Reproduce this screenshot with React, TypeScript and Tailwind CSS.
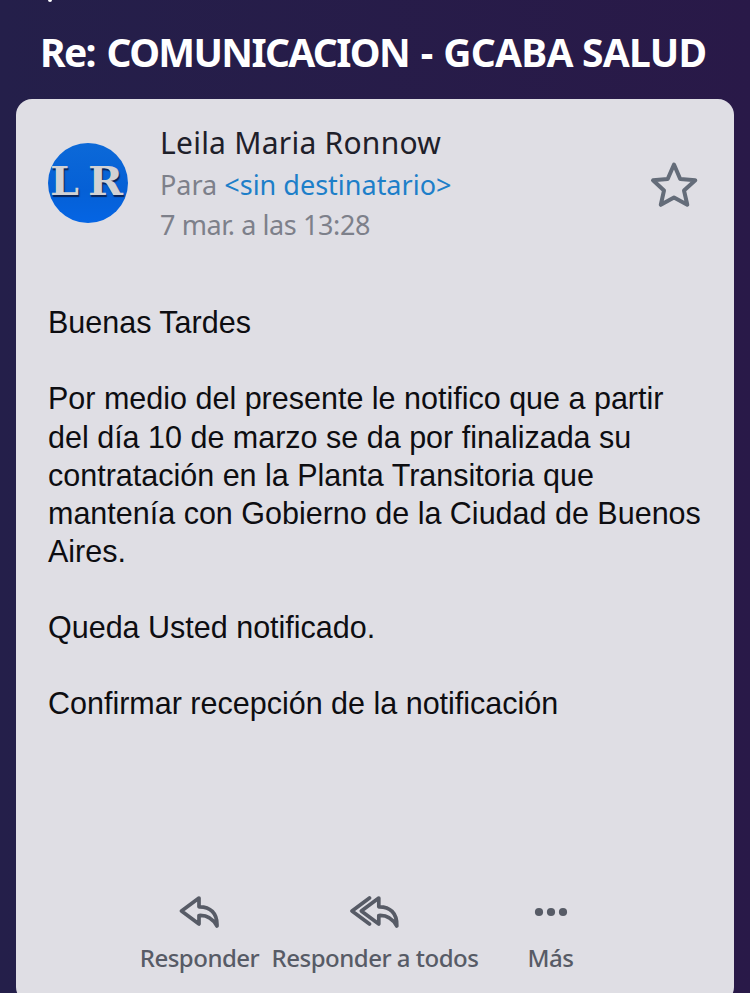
const ARROW = 'M20 3 L2.5 16 L20 29 V20.5 C28 20 34 24 38 31 C38.5 18 31 11.5 20 11.8 Z';

function Avatar() {
  return (
    <div className="w-20 h-20 rounded-full overflow-hidden shrink-0">
      <svg width="80" height="80" viewBox="0 0 80 80">
        <defs>
          <linearGradient id="avatar" x1="0" y1="0" x2="0" y2="1">
            <stop offset="0" stopColor="#0c69d8" />
            <stop offset="0.6" stopColor="#0560d6" />
            <stop offset="1" stopColor="#0565e4" />
          </linearGradient>
        </defs>
        <rect width="80" height="80" fill="url(#avatar)" />
        <g
          className="[text-shadow:1px_2px_1px_#0a2458]"
          fontFamily="'DejaVu Serif', serif"
          fontWeight="700"
          fontSize="40"
          fill="#d2d2d4"
        >
          <text x="2" y="51.5" textLength="29" lengthAdjust="spacingAndGlyphs">L</text>
          <text x="40" y="51.5" textLength="35" lengthAdjust="spacingAndGlyphs">R</text>
        </g>
      </svg>
    </div>
  );
}

function Star() {
  return (
    <svg width="48" height="48" viewBox="0 0 48 48" fill="none" stroke="#646c79" strokeWidth="4" strokeLinejoin="round">
      <path d="M24 3.5 L30.2 18 L45.3 19.3 L34 29.5 L37.3 43.8 L24 36.5 L10.8 43.8 L14 29.5 L3 19.3 L17.7 18 Z" />
    </svg>
  );
}

function ReplyIcon() {
  return (
    <svg width="41" height="34" viewBox="0 0 41 34" fill="none" stroke="#575b66" strokeWidth="3.7" strokeLinejoin="round">
      <path d={ARROW} />
    </svg>
  );
}

function ReplyAllIcon() {
  return (
    <svg width="50" height="34" viewBox="0 0 50 34" fill="none" stroke="#575b66" strokeWidth="3.7" strokeLinejoin="round" strokeLinecap="round">
      <path d="M19.5 3 L2 16 L19.5 29" />
      <path d={ARROW} transform="translate(8.8 0)" />
    </svg>
  );
}

function MoreIcon() {
  return (
    <svg width="34" height="34" viewBox="0 0 34 34" fill="#575b66">
      <circle cx="5" cy="17" r="4.1" />
      <circle cx="17" cy="17" r="4.1" />
      <circle cx="29" cy="17" r="4.1" />
    </svg>
  );
}

export default function App() {
  return (
    <div className="w-[750px] h-[993px] overflow-hidden bg-linear-to-r from-[#241f4a] to-[#291948] font-['Noto_Sans',sans-serif]">
      {/* Subject */}
      <header className="relative h-[99px] pt-[26px] pl-10 whitespace-nowrap">
        <span className="absolute left-12 -top-[2px] w-1 h-1 rounded-full bg-white" />
        <h1 className="text-[39px] leading-[52px] font-bold text-white tracking-[-0.75px]">
          <span className="tracking-[-1.65px] [word-spacing:3.2px]">Re: COMUNICACION - </span>
          GCABA SALUD
        </h1>
      </header>

      {/* Message card */}
      <main className="mx-4 h-[904px] rounded-2xl bg-[#dfdee4] px-8 whitespace-nowrap">
        <div className="flex h-[204px]">
          <div className="pt-11">
            <Avatar />
          </div>
          <div className="ml-8 pt-6 flex-1">
            <p className="text-[30px] leading-10 tracking-[0.25px] text-[#1e202a]">Leila Maria Ronnow</p>
            <p className="text-[27px] leading-[44px] text-[#7d808a]">
              Para <span className="text-[#1d7fc9]">&lt;sin destinatario&gt;</span>
            </p>
            <p className="text-[27px] leading-9 tracking-[-0.4px] text-[#7d808a]">7 mar. a las 13:28</p>
          </div>
          <div className="pt-[62px] mr-1">
            <Star />
          </div>
        </div>

        {/* Body */}
        <div className="h-[588px] pt-[0.3px] font-['Liberation_Sans',sans-serif] text-[30.5px] leading-[38.1px] text-[#0d0d11]">
          <p className="mb-[38.1px]">Buenas Tardes</p>
          <p className="mb-[38.1px]">
            Por medio del presente le notifico que a partir
            <br />
            del día 10 de marzo se da por finalizada su
            <br />
            contratación en la Planta Transitoria que
            <br />
            mantenía con Gobierno de la Ciudad de Buenos
            <br />
            Aires.
          </p>
          <p className="mb-[38.1px]">Queda Usted notificado.</p>
          <p>Confirmar recepción de la notificación</p>
        </div>

        {/* Actions */}
        <footer className="flex ml-[92px] gap-3 pt-1 text-[24px] leading-8 font-medium tracking-[-0.5px] text-[#575b66]">
          <button className="w-[119px] flex flex-col items-center gap-[13px]">
            <ReplyIcon />
            Responder
          </button>
          <button className="w-[208px] flex flex-col items-center gap-[13px]">
            <ReplyAllIcon />
            Responder a todos
          </button>
          <button className="w-[119px] flex flex-col items-center gap-[13px]">
            <MoreIcon />
            Más
          </button>
        </footer>
      </main>
    </div>
  );
}
